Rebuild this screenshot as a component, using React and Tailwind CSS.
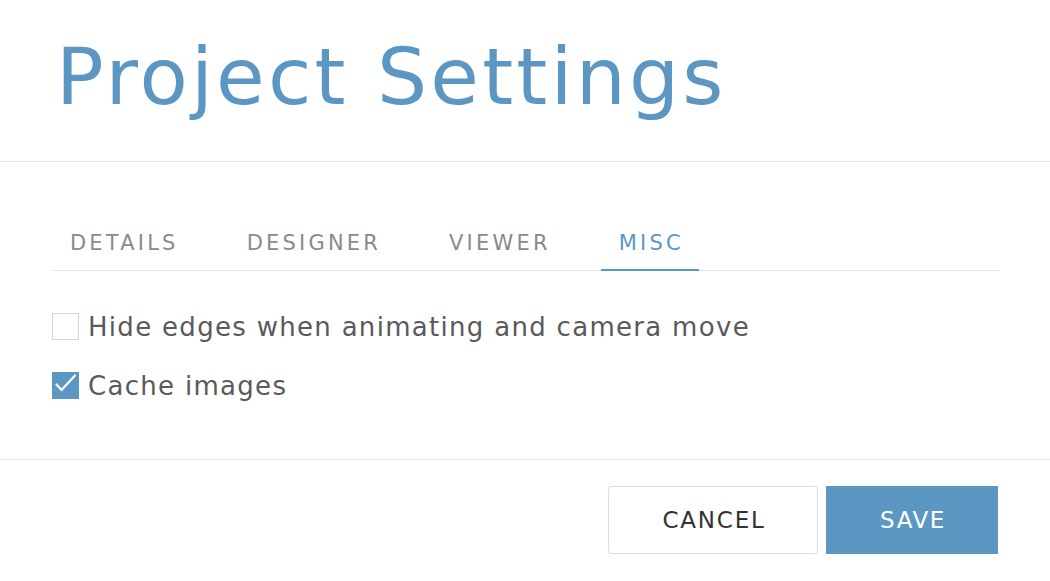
import React, { useState } from 'react';

const tabs = ['DETAILS', 'DESIGNER', 'VIEWER', 'MISC'];

const Checkbox = ({ checked, onChange, label }) => (
  <label className="flex items-center gap-[9px] cursor-pointer select-none">
    <span
      onClick={onChange}
      className={
        checked
          ? 'w-[27px] h-[27px] bg-[#5b97c2] flex'
          : 'w-[27px] h-[27px] bg-white border border-[#d6d6d6]'
      }
    >
      {checked && (
        <svg width="27" height="27" viewBox="0 0 27 27" fill="none">
          <path d="M4.5 12.5l5 5.5L23 3.5" stroke="white" strokeWidth="2.2" strokeLinecap="round" strokeLinejoin="round" />
        </svg>
      )}
    </span>
    <span className="text-[26px] tracking-[1.3px] text-[#5a5a5a] leading-none">{label}</span>
  </label>
);

const App = () => {
  const [active, setActive] = useState('MISC');
  const [hideEdges, setHideEdges] = useState(false);
  const [cacheImages, setCacheImages] = useState(true);

  return (
    <div className="w-[1050px] h-[581px] bg-white overflow-hidden" style={{ fontFamily: '"DejaVu Sans", sans-serif' }}>
      <div className="h-[162px] border-b border-[#e6e6e6] pl-[56px] pt-[17px]">
        <h1 className="text-[79px] leading-[120px] tracking-[3.2px] text-[#5b97c2] font-normal">Project Settings</h1>
      </div>

      <div className="px-[52px] pt-[56px]">
        <div className="flex gap-[35px] border-b border-[#e6e6e6] h-[53px] w-[948px]">
          {tabs.map((t) => (
            <button
              key={t}
              onClick={() => setActive(t)}
              className={
                t === active
                  ? 'pl-[18px] pr-[15px] text-[21px] tracking-[3.2px] text-[#5b97c2] border-b-2 border-[#5b97c2] -mb-px'
                  : 'pl-[18px] pr-[15px] text-[21px] tracking-[3.2px] text-[#8a8a8a]'
              }
            >
              {t}
            </button>
          ))}
        </div>

        <div className="pt-[42px] pb-[60px] flex flex-col gap-[32px]">
          <Checkbox checked={hideEdges} onChange={() => setHideEdges(!hideEdges)} label="Hide edges when animating and camera move" />
          <Checkbox checked={cacheImages} onChange={() => setCacheImages(!cacheImages)} label="Cache images" />
        </div>
      </div>

      <div className="border-t border-[#e6e6e6] flex justify-end gap-[8px] pr-[52px] pt-[26px]">
        <button className="w-[210px] h-[68px] border border-[#dedede] rounded-[3px] text-[23px] tracking-[1.8px] pl-[2px] text-[#333]">CANCEL</button>
        <button className="w-[172px] h-[68px] bg-[#5b97c2] text-[23px] tracking-[1.6px] pl-[2px] text-white">SAVE</button>
      </div>
    </div>
  );
};

export default App;
